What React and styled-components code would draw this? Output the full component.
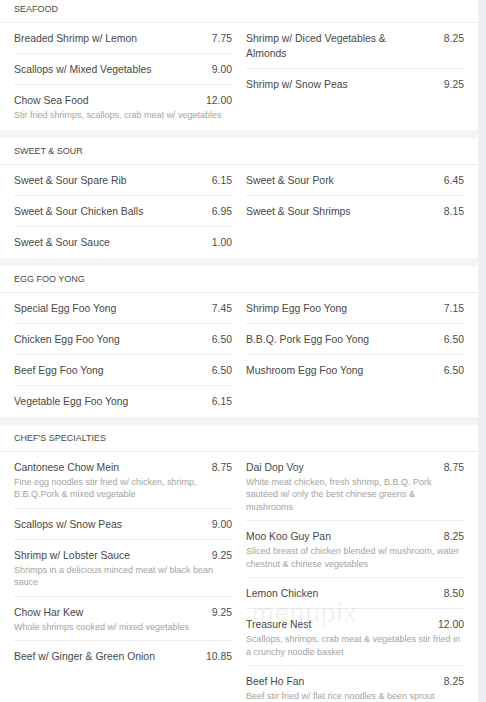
import styled, { createGlobalStyle } from "styled-components";

const GlobalStyle = createGlobalStyle`
  html, body {
    margin: 0;
    padding: 0;
    background: #eeeff3;
  }
  body {
    font-family: "Liberation Sans", Arial, sans-serif;
    overflow: hidden;
  }
`;

const menu = [
  {
    title: "Seafood",
    left: [
      { name: "Breaded Shrimp w/ Lemon", price: "7.75" },
      { name: "Scallops w/ Mixed Vegetables", price: "9.00" },
      {
        name: "Chow Sea Food",
        price: "12.00",
        desc: "Stir fried shrimps, scallops, crab meat w/ vegetables",
      },
    ],
    right: [
      { name: "Shrimp w/ Diced Vegetables & Almonds", price: "8.25" },
      { name: "Shrimp w/ Snow Peas", price: "9.25" },
    ],
  },
  {
    title: "Sweet & Sour",
    left: [
      { name: "Sweet & Sour Spare Rib", price: "6.15" },
      { name: "Sweet & Sour Chicken Balls", price: "6.95" },
      { name: "Sweet & Sour Sauce", price: "1.00" },
    ],
    right: [
      { name: "Sweet & Sour Pork", price: "6.45" },
      { name: "Sweet & Sour Shrimps", price: "8.15" },
    ],
  },
  {
    title: "Egg Foo Yong",
    left: [
      { name: "Special Egg Foo Yong", price: "7.45" },
      { name: "Chicken Egg Foo Yong", price: "6.50" },
      { name: "Beef Egg Foo Yong", price: "6.50" },
      { name: "Vegetable Egg Foo Yong", price: "6.15" },
    ],
    right: [
      { name: "Shrimp Egg Foo Yong", price: "7.15" },
      { name: "B.B.Q. Pork Egg Foo Yong", price: "6.50" },
      { name: "Mushroom Egg Foo Yong", price: "6.50" },
    ],
  },
  {
    title: "Chef's Specialties",
    left: [
      {
        name: "Cantonese Chow Mein",
        price: "8.75",
        desc: "Fine egg noodles stir fried w/ chicken, shrimp, B.B.Q.Pork & mixed vegetable",
      },
      { name: "Scallops w/ Snow Peas", price: "9.00" },
      {
        name: "Shrimp w/ Lobster Sauce",
        price: "9.25",
        desc: "Shrimps in a delicious minced meat w/ black bean sauce",
      },
      {
        name: "Chow Har Kew",
        price: "9.25",
        desc: "Whole shrimps cooked w/ mixed vegetables",
      },
      { name: "Beef w/ Ginger & Green Onion", price: "10.85" },
    ],
    right: [
      {
        name: "Dai Dop Voy",
        price: "8.75",
        desc: "White meat chicken, fresh shrimp, B.B.Q. Pork sautéed w/ only the best chinese greens & mushrooms",
      },
      {
        name: "Moo Koo Guy Pan",
        price: "8.25",
        desc: "Sliced breast of chicken blended w/ mushroom, water chestnut & chinese vegetables",
      },
      { name: "Lemon Chicken", price: "8.50" },
      {
        name: "Treasure Nest",
        price: "12.00",
        desc: "Scallops, shrimps, crab meat & vegetables stir fried in a crunchy noodle basket",
      },
      {
        name: "Beef Ho Fan",
        price: "8.25",
        desc: "Beef stir fried w/ flat rice noodles & been sprout",
      },
    ],
  },
];

export default function App() {
  return (
    <>
      <GlobalStyle />
      <Page>
        {menu.map((section) => (
          <Section key={section.title}>
            <SectionTitle>{section.title}</SectionTitle>
            <Columns>
              <Column>
                {section.left.map((item) => (
                  <MenuItem key={item.name} item={item} />
                ))}
              </Column>
              <Column>
                {section.right.map((item) => (
                  <MenuItem key={item.name} item={item} />
                ))}
              </Column>
            </Columns>
          </Section>
        ))}
        <Watermark>menupix</Watermark>
      </Page>
    </>
  );
}

function MenuItem({ item }) {
  return (
    <Item>
      <ItemHead>
        <ItemName>{item.name}</ItemName>
        <ItemPrice>{item.price}</ItemPrice>
      </ItemHead>
      {item.desc && <ItemDesc>{item.desc}</ItemDesc>}
    </Item>
  );
}

const Page = styled.div`
  position: relative;
  width: 478px;
  margin-top: -4px;
  display: flex;
  flex-direction: column;
  gap: 8px;
  background: #f3f4f6;
`;

const Section = styled.section`
  background: #fff;
`;

const SectionTitle = styled.h3`
  margin: 0;
  height: 26px;
  padding: 0 14px;
  display: flex;
  align-items: center;
  border-bottom: 1px solid #ececec;
  font-size: 9px;
  font-weight: normal;
  text-transform: uppercase;
  color: #4a4a4a;
`;

const Columns = styled.div`
  display: grid;
  grid-template-columns: 218px 218px;
  column-gap: 14px;
  padding: 0 14px 1px;
`;

const Column = styled.div`
  display: flex;
  flex-direction: column;
`;

const Item = styled.div`
  padding: 8px 0 7px;
  border-bottom: 1px solid #ececec;

  &:last-child {
    border-bottom: none;
  }
`;

const ItemHead = styled.div`
  display: flex;
  justify-content: space-between;
  align-items: flex-start;
`;

const ItemName = styled.span`
  font-size: 10.4px;
  line-height: 15px;
  color: #484848;
  max-width: 160px;
`;

const ItemPrice = styled.span`
  font-size: 10.4px;
  line-height: 15px;
  color: #4d4d4d;
`;

const ItemDesc = styled.p`
  margin: 1px 0 0;
  font-size: 9px;
  line-height: 12.5px;
  color: #a3a3a3;
`;

const Watermark = styled.div`
  position: absolute;
  left: 252px;
  top: 602px;
  font-size: 26px;
  letter-spacing: 1px;
  color: rgba(0, 0, 0, 0.06);
  pointer-events: none;
`;
